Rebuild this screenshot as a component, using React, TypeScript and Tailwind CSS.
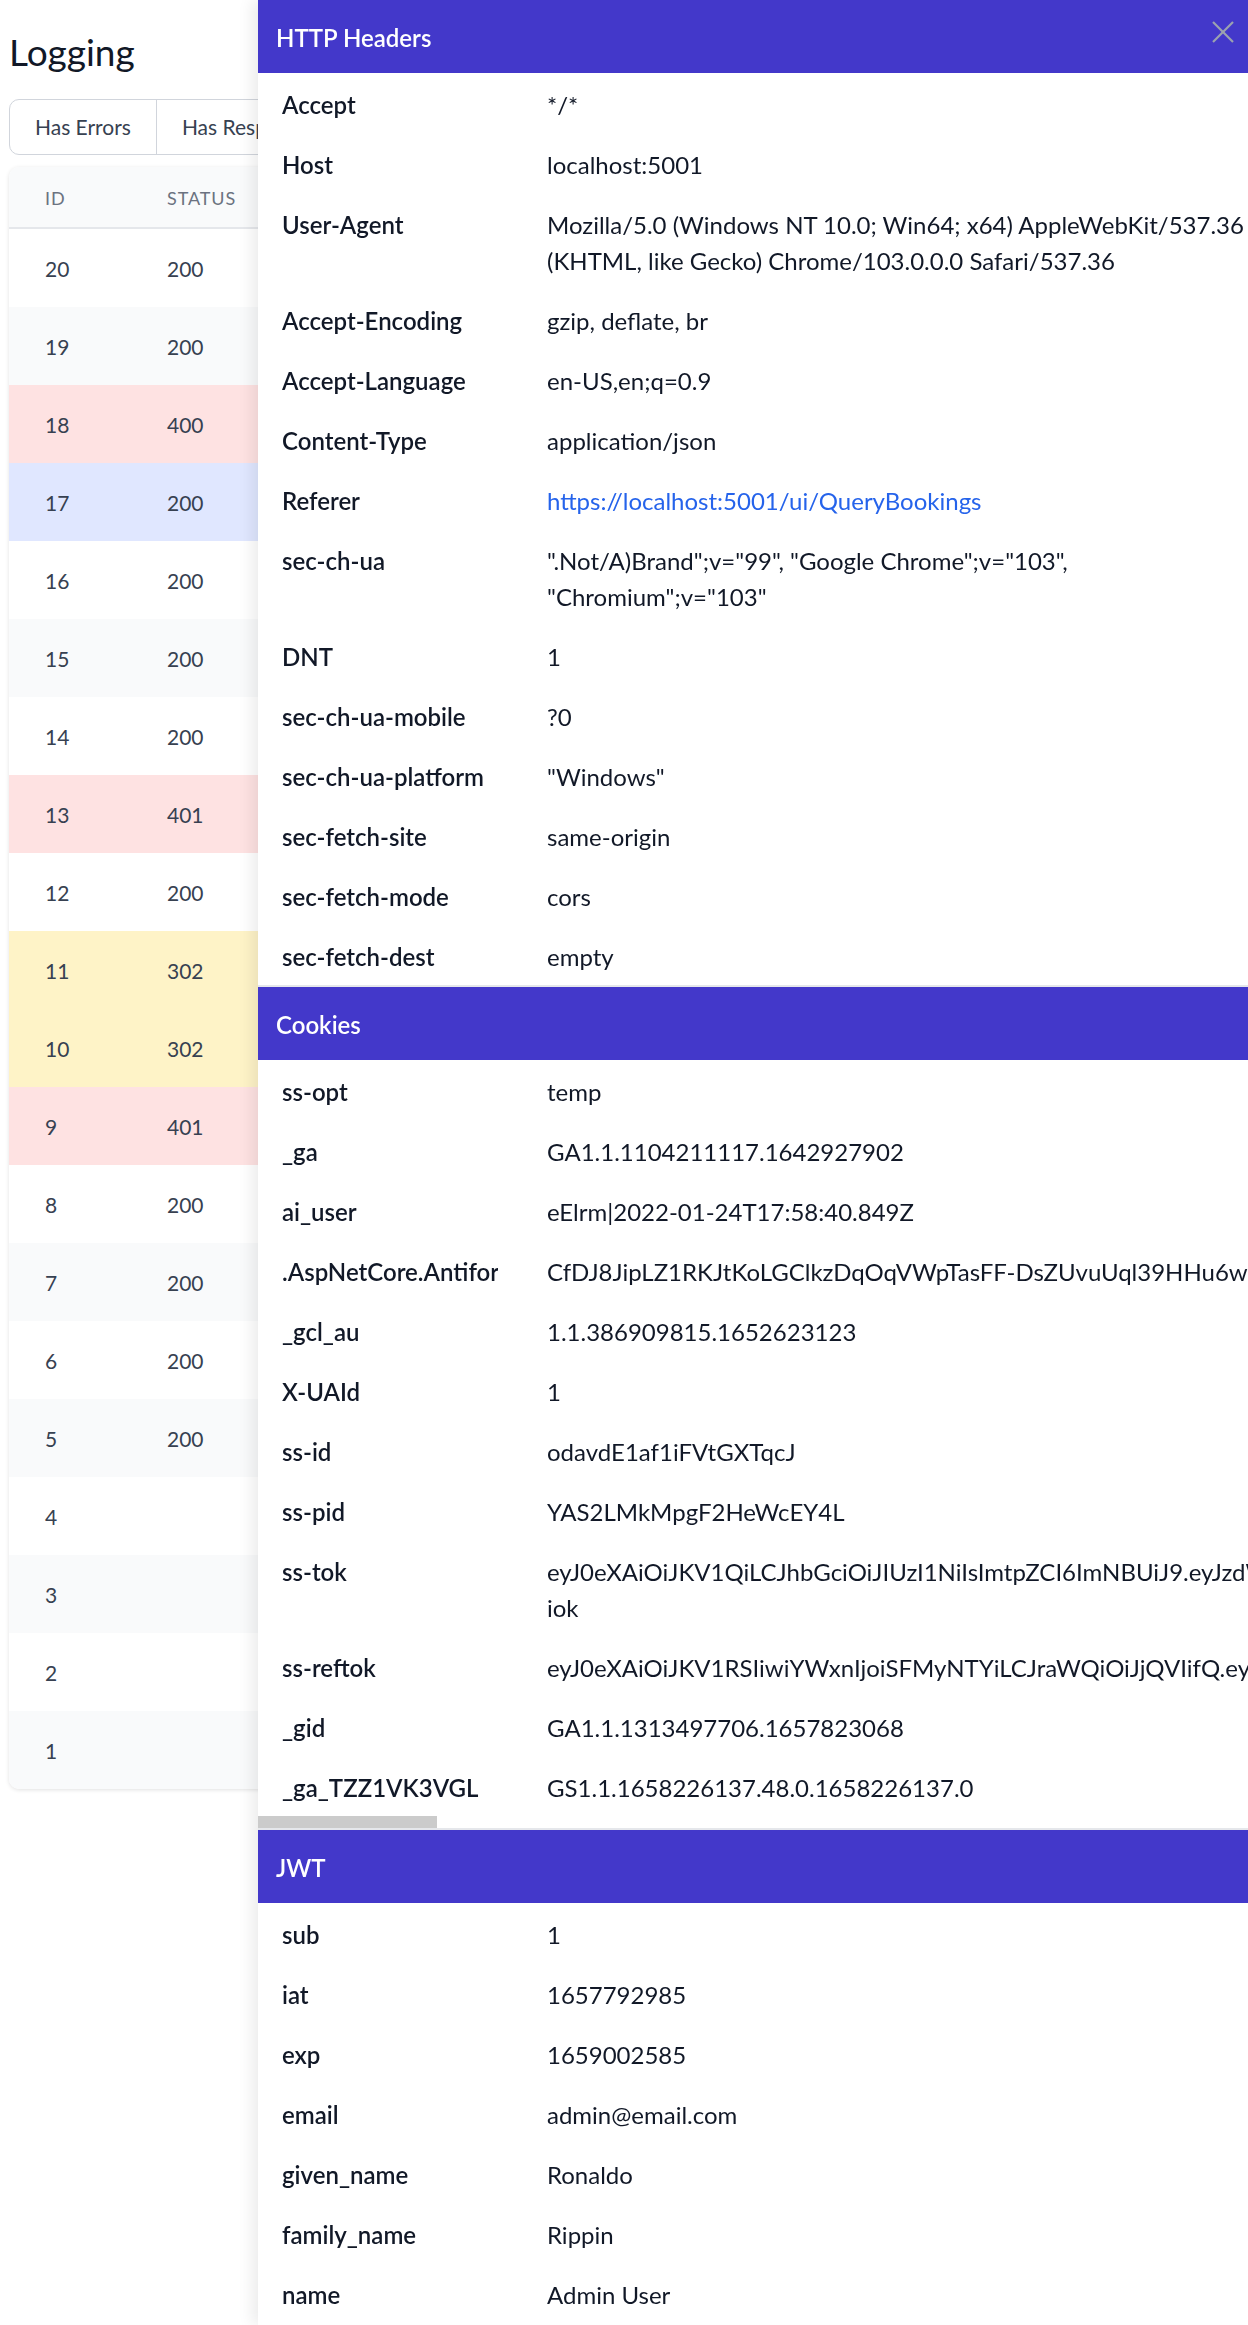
import React from "react";

type Row = { id: number; status: string; bg: string };

const rows: Row[] = [
  { id: 20, status: "200", bg: "bg-white" },
  { id: 19, status: "200", bg: "bg-gray-50" },
  { id: 18, status: "400", bg: "bg-[#fee2e2]" },
  { id: 17, status: "200", bg: "bg-[#e0e7ff]" },
  { id: 16, status: "200", bg: "bg-white" },
  { id: 15, status: "200", bg: "bg-gray-50" },
  { id: 14, status: "200", bg: "bg-white" },
  { id: 13, status: "401", bg: "bg-[#fee2e2]" },
  { id: 12, status: "200", bg: "bg-white" },
  { id: 11, status: "302", bg: "bg-[#fef3c7]" },
  { id: 10, status: "302", bg: "bg-[#fef3c7]" },
  { id: 9, status: "401", bg: "bg-[#fee2e2]" },
  { id: 8, status: "200", bg: "bg-white" },
  { id: 7, status: "200", bg: "bg-gray-50" },
  { id: 6, status: "200", bg: "bg-white" },
  { id: 5, status: "200", bg: "bg-gray-50" },
  { id: 4, status: "", bg: "bg-white" },
  { id: 3, status: "", bg: "bg-gray-50" },
  { id: 2, status: "", bg: "bg-white" },
  { id: 1, status: "", bg: "bg-gray-50" },
];

type KV = { k: string; v: string[]; link?: boolean };

const headers: KV[] = [
  { k: "Accept", v: ["*/*"] },
  { k: "Host", v: ["localhost:5001"] },
  {
    k: "User-Agent",
    v: [
      "Mozilla/5.0 (Windows NT 10.0; Win64; x64) AppleWebKit/537.36",
      "(KHTML, like Gecko) Chrome/103.0.0.0 Safari/537.36",
    ],
  },
  { k: "Accept-Encoding", v: ["gzip, deflate, br"] },
  { k: "Accept-Language", v: ["en-US,en;q=0.9"] },
  { k: "Content-Type", v: ["application/json"] },
  { k: "Referer", v: ["https://localhost:5001/ui/QueryBookings"], link: true },
  {
    k: "sec-ch-ua",
    v: ['".Not/A)Brand";v="99", "Google Chrome";v="103",', '"Chromium";v="103"'],
  },
  { k: "DNT", v: ["1"] },
  { k: "sec-ch-ua-mobile", v: ["?0"] },
  { k: "sec-ch-ua-platform", v: ['"Windows"'] },
  { k: "sec-fetch-site", v: ["same-origin"] },
  { k: "sec-fetch-mode", v: ["cors"] },
  { k: "sec-fetch-dest", v: ["empty"] },
];

const cookies: KV[] = [
  { k: "ss-opt", v: ["temp"] },
  { k: "_ga", v: ["GA1.1.1104211117.1642927902"] },
  { k: "ai_user", v: ["eElrm|2022-01-24T17:58:40.849Z"] },
  {
    k: ".AspNetCore.Antiforgery.Mq5BvE3a7rk",
    v: [
      "CfDJ8JipLZ1RKJtKoLGClkzDqOqVWpTasFF-DsZUvuUql39HHu6wgEGm8hUxOqVnWbXPm1rEKz5hZpCdrM0Y7f",
    ],
  },
  { k: "_gcl_au", v: ["1.1.386909815.1652623123"] },
  { k: "X-UAId", v: ["1"] },
  { k: "ss-id", v: ["odavdE1af1iFVtGXTqcJ"] },
  { k: "ss-pid", v: ["YAS2LMkMpgF2HeWcEY4L"] },
  {
    k: "ss-tok",
    v: [
      "eyJ0eXAiOiJKV1QiLCJhbGciOiJIUzI1NiIsImtpZCI6ImNBUiJ9.eyJzdWIiOiIxIiwiaWF0IjoxNjU3NzkyOTg1LCJleHAiOjE2NTkwMDI1ODV9-",
      "iok",
    ],
  },
  {
    k: "ss-reftok",
    v: [
      "eyJ0eXAiOiJKV1RSIiwiYWxnIjoiSFMyNTYiLCJraWQiOiJjQVIifQ.eyJzdWIiOiIxIiwiaWF0IjoxNjU3NzkyOTg1LCJleHAiOjE2NjAzODQ5ODV9",
    ],
  },
  { k: "_gid", v: ["GA1.1.1313497706.1657823068"] },
  { k: "_ga_TZZ1VK3VGL", v: ["GS1.1.1658226137.48.0.1658226137.0"] },
];

const jwt: KV[] = [
  { k: "sub", v: ["1"] },
  { k: "iat", v: ["1657792985"] },
  { k: "exp", v: ["1659002585"] },
  { k: "email", v: ["admin@email.com"] },
  { k: "given_name", v: ["Ronaldo"] },
  { k: "family_name", v: ["Rippin"] },
  { k: "name", v: ["Admin User"] },
];

function SectionHeader({ title, close }: { title: string; close?: boolean }) {
  return (
    <div className="flex h-[73px] items-center justify-between bg-[#4338ca] pl-[18px] pr-[14px]">
      <div className="pt-[2px] text-[24px] font-semibold leading-[36px] text-white">{title}</div>
      {close ? (
        <svg
          width="22"
          height="22"
          viewBox="0 0 22 22"
          className="mb-[9px] text-[#9ca3af]"
          fill="none"
          stroke="currentColor"
          strokeWidth="2.2"
        >
          <line x1="1" y1="1" x2="21" y2="21" />
          <line x1="21" y1="1" x2="1" y2="21" />
        </svg>
      ) : null}
    </div>
  );
}

function KVRow({ item }: { item: KV }) {
  return (
    <div className="flex pb-[10px] pt-[14px] text-[24px] leading-[36px]">
      <div className="ml-[24px] mr-[49px] w-[216px] shrink-0 overflow-hidden whitespace-nowrap font-semibold text-[#111827]">
        {item.k}
      </div>
      <div className="whitespace-nowrap text-[#111827]">
        {item.v.map((line, i) => (
          <div key={i} className={item.link ? "text-[#2563eb]" : ""}>
            {line}
          </div>
        ))}
      </div>
    </div>
  );
}

export default function App() {
  return (
    <div className="relative min-h-[2325px] bg-white font-['Lato','Noto_Sans',sans-serif]">
      {/* Page behind */}
      <div className="px-[9px] pt-[22px]">
        <h1 className="h-[60px] text-[37px] font-normal leading-[60px] text-[#111827]">Logging</h1>
        <div className="mt-[17px] flex">
          <div className="flex h-[56px] overflow-hidden rounded-[10px] border border-gray-300 bg-white text-[21px] leading-[30px] text-[#374151]">
            <div className="flex items-center border-r border-gray-300 px-[25px]">Has Errors</div>
            <div className="flex items-center border-r border-gray-300 px-[25px]">Has Response</div>
            <div className="flex items-center border-r border-gray-300 px-[25px]">Has Session</div>
            <div className="flex items-center px-[25px]">Has Cookies</div>
          </div>
        </div>
        <div className="mt-[12px] w-[1230px] overflow-hidden rounded-[10px] bg-white shadow-[0_1px_4px_rgba(0,0,0,0.12)]">
          <div className="flex h-[62px] items-center border-b-2 border-gray-200 bg-gray-50 pt-[2px] text-[18px] uppercase tracking-wider text-[#6b7280]">
            <div className="w-[158px] pl-[36px]">Id</div>
            <div className="w-[160px]">Status</div>
            <div className="w-[200px]">Method</div>
            <div>Path</div>
          </div>
          {rows.map((r) => (
            <div key={r.id} className={`flex h-[78px] items-center pt-[2px] text-[21px] text-[#374151] ${r.bg}`}>
              <div className="w-[158px] pl-[36px]">{r.id}</div>
              <div className="w-[160px]">{r.status}</div>
            </div>
          ))}
        </div>
      </div>

      {/* Slide-over panel */}
      <div className="fixed inset-y-0 right-0 w-[990px] overflow-hidden bg-white shadow-[-6px_0_14px_rgba(0,0,0,0.08)]">
        <SectionHeader title="HTTP Headers" close />
        <div>
          {headers.map((h) => (
            <KVRow key={h.k} item={h} />
          ))}
        </div>
        <div className="h-[2px] bg-gray-200" />
        <SectionHeader title="Cookies" />
        <div className="overflow-hidden">
          {cookies.map((h) => (
            <KVRow key={h.k} item={h} />
          ))}
        </div>
        <div className="h-[12px] bg-white">
          <div className="h-full w-[179px] bg-[#cbcbcb]" />
        </div>
        <div className="h-[2px] bg-gray-200" />
        <SectionHeader title="JWT" />
        <div>
          {jwt.map((h) => (
            <KVRow key={h.k} item={h} />
          ))}
        </div>
      </div>
    </div>
  );
}
